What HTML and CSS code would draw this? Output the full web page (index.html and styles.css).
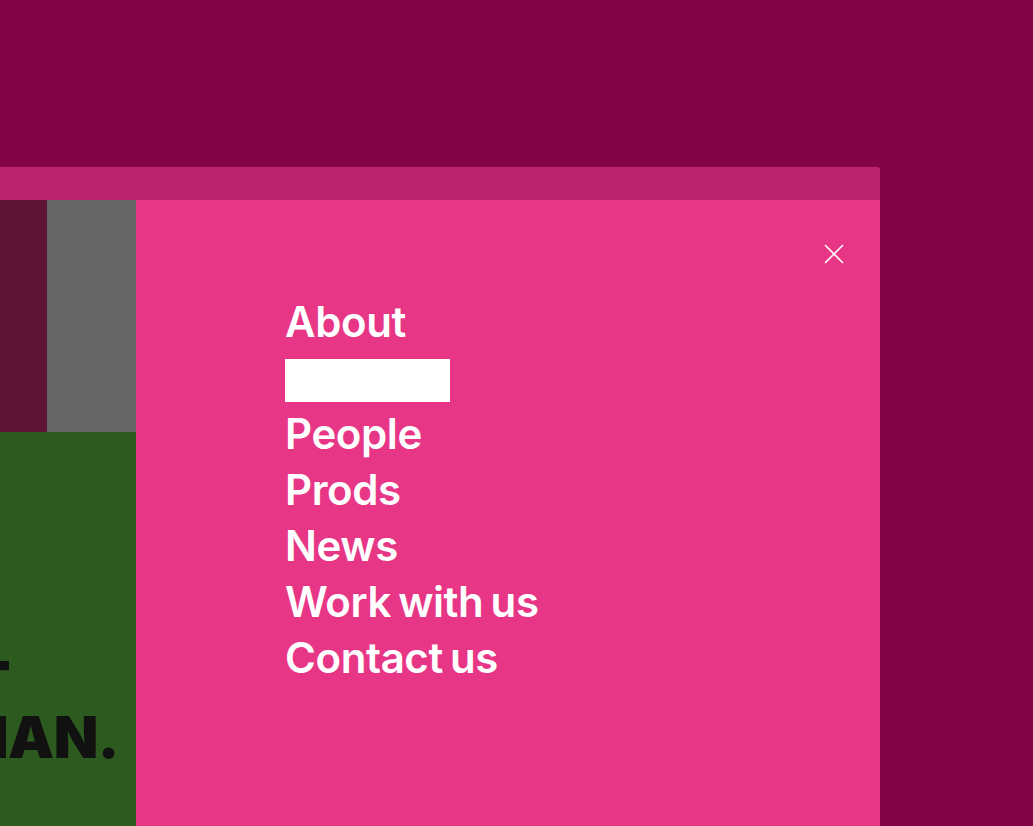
FILE: index.html
```html
<!DOCTYPE html>
<html>
<head>
<meta charset="utf-8">
<link rel="stylesheet" href="styles.css">
</head>
<body>
<div class="stage">
  <div class="window">
    <div class="titlebar"></div>
    <div class="content">
      <div class="side">
        <div class="side-top">
          <div class="maroon"></div>
          <div class="gray"></div>
        </div>
        <div class="side-bottom">
          <div class="big-line l1"><span>T</span></div>
          <div class="big-line l2"><span>HUMAN.</span></div>
        </div>
      </div>
      <div class="panel">
        <button class="close" aria-label="Close">
          <svg width="20" height="20" viewBox="0 0 20 20"><path d="M1 1 L19 19 M19 1 L1 19" stroke="#fff" stroke-width="1.6" fill="none"/></svg>
        </button>
        <nav class="menu">
          <a class="item">About</a>
          <a class="item current"><span class="block"></span></a>
          <a class="item">People</a>
          <a class="item">Prods</a>
          <a class="item">News</a>
          <a class="item">Work with us</a>
          <a class="item">Contact us</a>
        </nav>
      </div>
    </div>
  </div>
</div>
</body>
</html>
```

FILE: styles.css
```css
html, body {
  margin: 0;
  padding: 0;
  height: 100%;
  overflow: hidden;
}
body {
  background: #830548;
  font-family: Inter, "Liberation Sans", sans-serif;
}
.stage {
  padding-top: 167px;
  height: 826px;
  box-sizing: border-box;
  display: flex;
}
.window {
  width: 880px;
  height: 659px;
  display: flex;
  flex-direction: column;
  border-top-right-radius: 3px;
  overflow: hidden;
}
.titlebar {
  height: 33px;
  background: #bb246c;
  flex: none;
}
.content {
  flex: 1;
  display: flex;
  min-height: 0;
}
.side {
  width: 136px;
  flex: none;
  display: flex;
  flex-direction: column;
}
.side-top {
  height: 232px;
  display: flex;
  flex: none;
}
.maroon {
  width: 47px;
  background: #5e1535;
}
.gray {
  flex: 1;
  background: #666666;
}
.side-bottom {
  flex: 1;
  background: #2d5a1e;
  overflow: hidden;
  padding-top: 223px;
}
.big-line {
  display: flex;
  justify-content: flex-end;
  white-space: nowrap;
  font-family: Inter, "Liberation Sans", sans-serif;
  font-weight: 900;
  font-size: 58px;
  line-height: 55px;
  color: #111111;
  letter-spacing: -0.5px;
}
.l1 { padding-right: 126px; }
.l2 { padding-right: 17px; }
.panel {
  flex: 1;
  background: #e83687;
  position: relative;
  padding: 94px 0 0 149px;
}
.close {
  position: absolute;
  top: 43px;
  right: 35px;
  width: 22px;
  height: 22px;
  padding: 1px;
  border: 0;
  background: none;
  cursor: pointer;
}
.menu {
  display: flex;
  flex-direction: column;
  align-items: flex-start;
}
.item {
  display: block;
  color: #ffffff;
  font-weight: 600;
  font-size: 42px;
  line-height: 56px;
  letter-spacing: -0.4px;
  word-spacing: -3px;
  height: 56px;
}
.item.current {
  display: flex;
  align-items: center;
  padding-top: 4px;
  box-sizing: border-box;
}
.block {
  display: block;
  width: 165px;
  height: 43px;
  background: #ffffff;
}
```
